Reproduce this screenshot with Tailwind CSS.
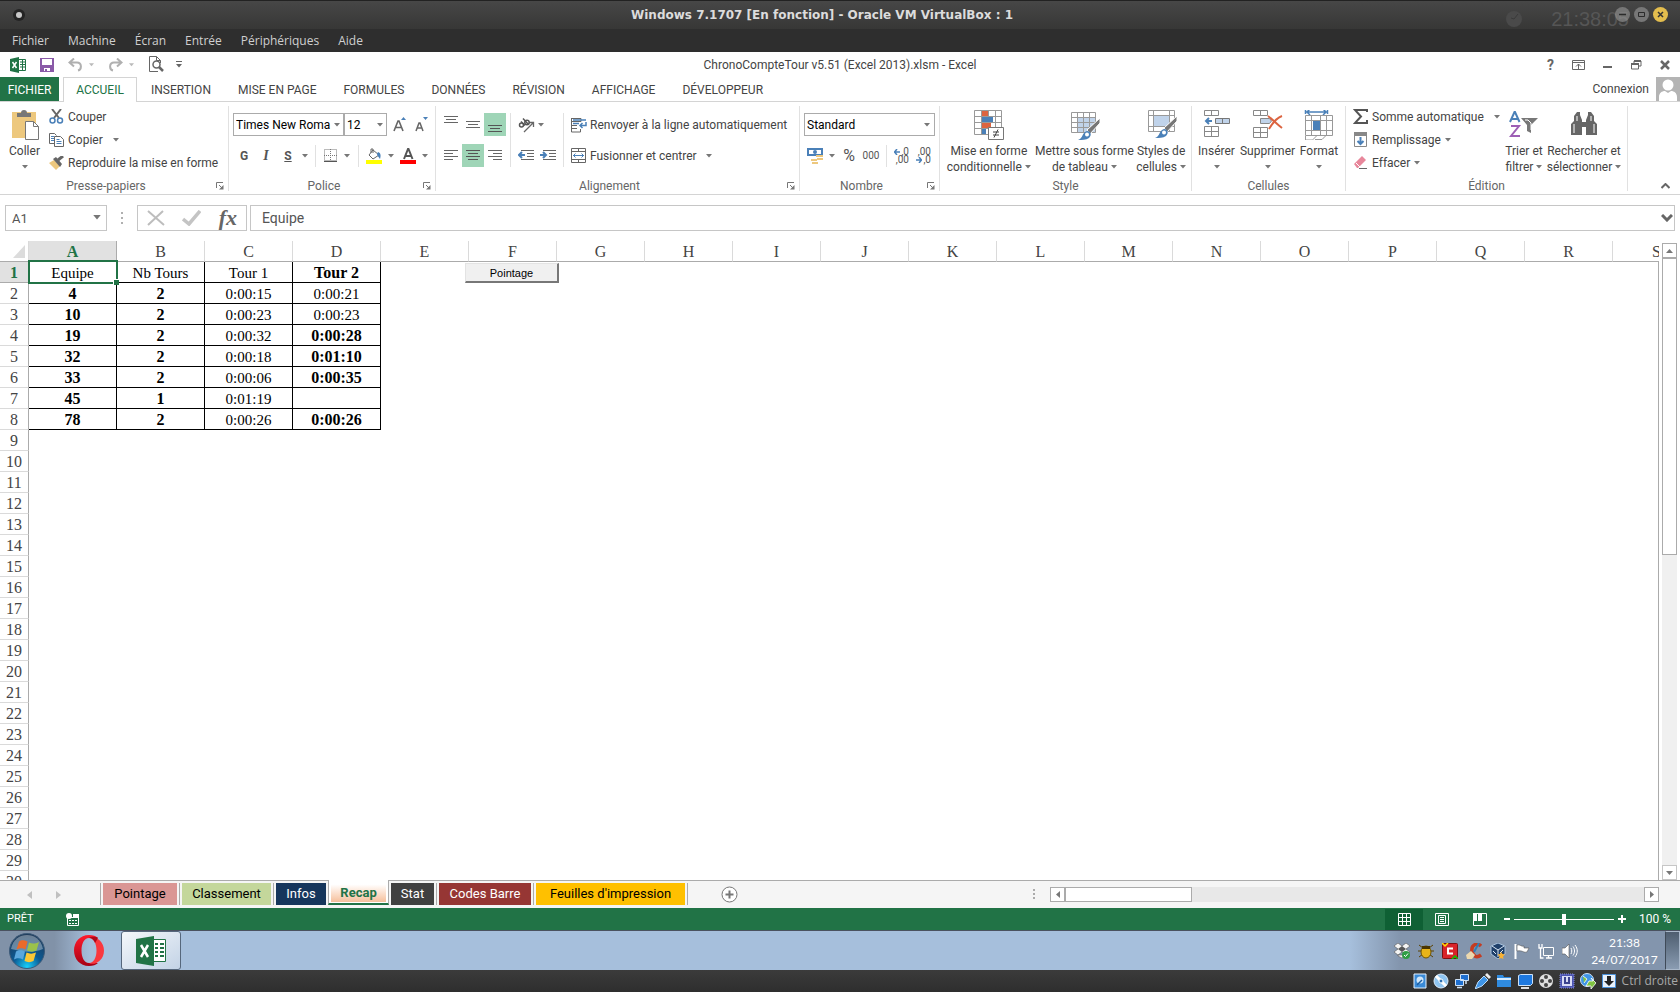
<!DOCTYPE html>
<html lang="fr" class="h-full">

<head>
  <meta charset="UTF-8" />
  <meta name="viewport" content="width=device-width, initial-scale=1.0" />
  <title>ChronoCompteTour v5.51 (Excel 2013).xlsm - Excel</title>
  <script src="https://cdn.jsdelivr.net/npm/@tailwindcss/browser@4"></script>
</head>

<body class="h-full min-h-screen flex flex-col overflow-hidden bg-white text-[#444444] text-[12px] leading-4 font-['Roboto','Noto_Sans',sans-serif]">

  <!-- shared glyphs -->
  <svg class="hidden">
    <symbol id="caret" viewBox="0 0 6 4"><path d="M0 0h6L3 3.5z" fill="#777" /></symbol>
    <symbol id="launcher" viewBox="0 0 8 8"><path d="M.5 6V.5H7M3 3l3 3" fill="none" stroke="#777" /><path d="M7.500 3v4.500H3z" fill="#777" /></symbol>
  </svg>

  <!-- Host window title -->
  <header class="relative h-[29px] shrink-0 flex items-center justify-between px-3 bg-gradient-to-b from-[#474747] to-[#373736] border-t border-[#222]">
    <svg width="14" height="14" viewBox="0 0 14 14"><circle cx="7" cy="7" r="6" fill="#242424" /><circle cx="7" cy="7" r="3" fill="#c8c8c8" /></svg>
    <h1 class="absolute inset-x-0 pr-[36px] text-center font-bold text-[12px] text-[#dcdcdc] font-['DejaVu_Sans',sans-serif]">Windows 7.1707 [En fonction] - Oracle VM VirtualBox : 1</h1>
    <div class="relative flex items-center gap-1 pt-2">
      <svg class="mr-[24px]" width="18" height="18" viewBox="0 0 18 18"><circle cx="9" cy="9" r="8" fill="#4a4a4a" /><path d="M9 9l4-5M9 9L6 8" stroke="#3a3a3a" /></svg>
      <span class="mr-[39px] text-[20px] leading-5 text-[#565656] font-['Liberation_Sans',sans-serif]">21:38:05</span>
      <div class="absolute right-0 top-[6px] flex gap-1">
        <button aria-label="Réduire"><svg width="15" height="15" viewBox="0 0 15 15"><circle cx="7.500" cy="7.500" r="7.500" fill="#999" fill-opacity=".6" /><path d="M4 7.500h7" stroke="#2b2b2b" stroke-width="1.500" /></svg></button>
        <button aria-label="Agrandir"><svg width="15" height="15" viewBox="0 0 15 15"><circle cx="7.500" cy="7.500" r="7.500" fill="#777" /><path d="M4.500 5.500h6v4h-6z" fill="none" stroke="#2b2b2b" /></svg></button>
        <button aria-label="Fermer"><svg width="15" height="15" viewBox="0 0 15 15"><circle cx="7.500" cy="7.500" r="7.500" fill="#e3bd4e" /><path d="M5 5l5 5M10 5l-5 5" stroke="#333" stroke-width="1.500" /></svg></button>
      </div>
    </div>
  </header>

  <!-- Host menu -->
  <nav class="h-[23px] shrink-0 flex items-center gap-[19px] px-3 bg-[#2e2e2e] text-[#d0d0d0] font-['Open_Sans',sans-serif]">
    <a href="#">Fichier</a>
    <a href="#">Machine</a>
    <a href="#">Écran</a>
    <a href="#">Entrée</a>
    <a href="#">Périphériques</a>
    <a href="#">Aide</a>
  </nav>

  <!-- Quick access bar -->
  <div class="relative h-[25px] shrink-0 flex items-center px-[10px]">
    <svg width="16" height="16" viewBox="0 0 16 16"><path d="M9 2.500h6.500v11H9" fill="#fff" stroke="#217346" /><path d="M10 5h5M10 7.500h5M10 10h5M12.500 3v10" stroke="#217346" /><path d="M0 2l9-2v16l-9-2z" fill="#217346" /><path d="M2.500 5l4 6M6.500 5l-4 6" stroke="#fff" stroke-width="1.500" /></svg>
    <button class="ml-[14px]" aria-label="Enregistrer"><svg width="14" height="14" viewBox="0 0 14 14"><path d="M0 0h14v14H0z" fill="#8a5aa8" /><path d="M2 1h10v6H2zM4 10h6v3H4z" fill="#fff" /><path d="M5 11h2v3H5z" fill="#8a5aa8" /></svg></button>
    <button class="ml-[14px] flex items-center gap-[6px]" aria-label="Annuler">
      <svg width="15" height="14" viewBox="0 0 15 14"><path d="M2 4.500h7c5 0 5 7 1 8M6 .500l-4.500 4L6 8.500" fill="none" stroke="#b0b0b0" stroke-width="2" /></svg>
      <svg class="opacity-50" width="5" height="4"><use href="#caret" /></svg>
    </button>
    <button class="ml-[14px] flex items-center gap-[6px]" aria-label="Rétablir">
      <svg width="15" height="14" viewBox="0 0 15 14"><path d="M13 4.500H6c-5 0-5 7-1 8M9 .500l4.500 4L9 8.500" fill="none" stroke="#b0b0b0" stroke-width="2" /></svg>
      <svg class="opacity-50" width="5" height="4"><use href="#caret" /></svg>
    </button>
    <button class="ml-[15px]" aria-label="Aperçu"><svg width="15" height="17" viewBox="0 0 15 17"><path d="M9 15.500H.5V.5h7l4 4V7M7.500.5v4h4" fill="none" stroke="#666" /><circle cx="7.500" cy="8.500" r="3.500" fill="#fff" stroke="#666" stroke-width="1.500" /><path d="M10 11l4 4" stroke="#666" stroke-width="2.500" /></svg></button>
    <button class="ml-3" aria-label="Personnaliser"><svg width="6" height="7" viewBox="0 0 6 7"><path d="M0 .5h6" stroke="#666" /><path d="M0 3h6L3 6.500z" fill="#666" /></svg></button>
    <h2 class="absolute inset-x-0 text-center pointer-events-none">ChronoCompteTour v5.51 (Excel 2013).xlsm - Excel</h2>
    <div class="ml-auto flex items-center gap-[18px]">
      <button class="font-bold text-[14px] text-[#666]" aria-label="Aide">?</button>
      <button aria-label="Options du ruban"><svg width="13" height="10" viewBox="0 0 13 10"><path d="M.5.5h12v9H.5zM.5 2.500h12M6.500 9V4M4 6.500L6.500 4 9 6.500" fill="none" stroke="#666" /></svg></button>
      <button aria-label="Réduire Excel"><svg width="10" height="10" viewBox="0 0 10 10"><path d="M0 6h9v2H0z" fill="#666" /></svg></button>
      <button aria-label="Restaurer"><svg width="11" height="10" viewBox="0 0 11 10"><path d="M3 3V1h7v5H8M.5 4h7v5h-7z" fill="none" stroke="#666" /><path d="M3 1h7M0 4h8" stroke="#666" stroke-width="2" /></svg></button>
      <button aria-label="Fermer Excel"><svg width="10" height="10" viewBox="0 0 10 10"><path d="M1 1l8 8M9 1L1 9" stroke="#666" stroke-width="2.500" /></svg></button>
    </div>
  </div>

  <!-- Ribbon tabs -->
  <nav class="h-[25px] shrink-0 flex items-stretch border-b border-[#d4d4d4]">
    <a href="#" class="w-[59px] pt-px flex items-center justify-center bg-[#217346] text-white">FICHIER</a>
    <a href="#" class="w-[74px] ml-1 -mb-px flex items-center justify-center bg-white border border-b-0 border-[#d4d4d4] text-[#217346]">ACCUEIL</a>
    <div class="ml-[14px] pt-[2px] flex items-center gap-[27px]">
      <a href="#">INSERTION</a>
      <a href="#">MISE EN PAGE</a>
      <a href="#">FORMULES</a>
      <a href="#">DONNÉES</a>
      <a href="#">RÉVISION</a>
      <a href="#">AFFICHAGE</a>
      <a href="#">DÉVELOPPEUR</a>
    </div>
    <a href="#" class="ml-auto mr-[7px] flex items-center">Connexion</a>
    <svg width="24" height="24" viewBox="0 0 24 24"><path d="M0 0h24v24H0z" fill="#b4b4b4" /><circle cx="12" cy="8" r="5.500" fill="#fff" /><path d="M3 24v-4c0-4 3-6 6-6l3 2 3-2c3 0 6 2 6 6v4z" fill="#fff" /></svg>
  </nav>

  <!-- Ribbon -->
  <section class="h-[93px] shrink-0 flex pt-1 pb-[3px] border-b border-[#d4d4d4]">
    <!-- Presse-papiers -->
    <div class="w-[229px] shrink-0 flex flex-col border-r border-[#e1e1e1]">
      <div class="flex-1 flex">
        <button class="w-[49px] pt-1 flex flex-col items-center">
          <svg width="30" height="30" viewBox="0 0 30 30"><path d="M2 2h24v26H2z" fill="#edc87e" /><path d="M7 7V3h4a3 3 0 0 1 6 0h4v4z" fill="#777" /><path d="M15.500 11.500h8l5 5v13h-13z" fill="#fff" stroke="#777" /><path d="M23.500 11.500v5h5" fill="none" stroke="#777" /></svg>
          <span class="mt-[3px]">Coller</span>
          <svg class="mt-[6px]" width="6" height="4"><use href="#caret" /></svg>
        </button>
        <div class="-mt-px flex flex-col items-start">
          <button class="h-[23px] flex items-center gap-1">
            <svg width="15" height="15" viewBox="0 0 15 15"><path d="M3 0l7 9M12 0L5 9" stroke="#666" stroke-width="2" /><circle cx="3.500" cy="11.500" r="2.500" fill="none" stroke="#4a80b8" stroke-width="1.500" /><circle cx="11" cy="11.500" r="2.500" fill="none" stroke="#4a80b8" stroke-width="1.500" /></svg>
            Couper
          </button>
          <button class="h-[23px] flex items-center gap-1">
            <svg width="15" height="14" viewBox="0 0 15 14"><path d="M5 10.500H.5V.5h5l2 2" fill="none" stroke="#666" /><path d="M2 3.500h3M2 5.500h3M2 7.500h3" stroke="#4a80b8" /><path d="M5.500 3.500h6l3 3v7h-9z" fill="#fff" stroke="#666" /><path d="M7.500 6.500h3M7.500 8.500h5M7.500 10.500h5" stroke="#4a80b8" /></svg>
            Copier
            <svg class="ml-[6px]" width="6" height="4"><use href="#caret" /></svg>
          </button>
          <button class="h-[23px] flex items-center gap-1">
            <svg width="15" height="14" viewBox="0 0 15 14"><path d="M0 7l5-3 6 6-4 4z" fill="#edc87e" /><path d="M4 3l3-2 6 7-2 3z" fill="#666" /><path d="M9 4l5-4" stroke="#666" stroke-width="3" /></svg>
            Reproduire la mise en forme
          </button>
        </div>
      </div>
      <div class="relative h-[10px] flex items-center justify-center pr-4 text-[#666]">Presse-papiers
        <button class="absolute right-1" aria-label="Options presse-papiers"><svg width="8" height="8"><use href="#launcher" /></svg></button>
      </div>
    </div>

    <!-- Police -->
    <div class="w-[207px] shrink-0 flex flex-col border-r border-[#e1e1e1]">
      <div class="flex-1 pt-[7px] pl-1 flex flex-col gap-2">
        <div class="h-[23px] flex items-center">
          <div class="relative h-[23px] flex items-center">
            <input aria-label="Police" value="Times New Roma" class="w-[111px] h-[23px] px-[2px] border border-[#ababab] text-black" />
            <svg class="absolute right-[4px]" width="6" height="4"><use href="#caret" /></svg>
          </div>
          <div class="relative h-[23px] flex items-center">
            <input aria-label="Taille" value="12" class="w-[43px] h-[23px] px-[2px] border border-[#ababab] text-black" />
            <svg class="absolute right-1" width="6" height="4"><use href="#caret" /></svg>
          </div>
          <button class="w-[22px] ml-[2px] flex justify-center" aria-label="Agrandir la police"><svg width="14" height="16" viewBox="0 0 14 16"><path d="M1 14L5 4h1l4 10M2.500 10.500h6" fill="none" stroke="#666" stroke-width="1.600" /><path d="M8 3h5l-2.500-3z" fill="#4a80b8" /></svg></button>
          <button class="w-[22px] flex justify-center" aria-label="Réduire la police"><svg width="14" height="16" viewBox="0 0 14 16"><path d="M1 14l3-8h1l3 8M2 11h5" fill="none" stroke="#666" stroke-width="1.500" /><path d="M8 0h5l-2.500 3z" fill="#4a80b8" /></svg></button>
        </div>
        <div class="h-[23px] flex items-center text-[#555]">
          <button class="w-[22px] font-bold">G</button>
          <button class="w-[22px] font-bold italic font-['Liberation_Serif',serif] text-[14px]">I</button>
          <button class="w-[22px] font-bold underline">S</button>
          <button class="w-3 flex justify-center" aria-label="Soulignement"><svg width="6" height="4"><use href="#caret" /></svg></button>
          <span class="w-px h-[22px] ml-1 bg-[#e1e1e1]"></span>
          <button class="w-[22px] ml-[3px] flex justify-center" aria-label="Bordures"><svg width="13" height="13" viewBox="0 0 13 13"><path d="M.5.5h12v11H.5zM6.500 0v12M0 6.500h13" fill="none" stroke="#777" stroke-dasharray="1 1" /><path d="M0 12.500h13" stroke="#555" /></svg></button>
          <button class="w-3 flex justify-center" aria-label="Choix bordures"><svg width="6" height="4"><use href="#caret" /></svg></button>
          <span class="w-px h-[22px] ml-[5px] bg-[#e1e1e1]"></span>
          <button class="w-[22px] ml-1 flex justify-center" aria-label="Remplissage"><svg width="16" height="16" viewBox="0 0 16 16"><path d="M7 2l6 5-6 4-4-4zM5 5V1h2v4" fill="#fff" stroke="#666" /><path d="M12 4c3 1 3 4 2 7-1-2-3-3-3-5z" fill="#4a80b8" /><path d="M0 12h16v4H0z" fill="#ff0" /></svg></button>
          <button class="w-3 flex justify-center" aria-label="Choix remplissage"><svg width="6" height="4"><use href="#caret" /></svg></button>
          <button class="w-[22px] flex justify-center" aria-label="Couleur de police"><svg width="16" height="16" viewBox="0 0 16 16"><path d="M4 11L8 1h.5l4 10M5.500 8h6" fill="none" stroke="#555" stroke-width="2" /><path d="M0 12h16v4H0z" fill="#f00" /></svg></button>
          <button class="w-3 flex justify-center" aria-label="Choix couleur"><svg width="6" height="4"><use href="#caret" /></svg></button>
        </div>
      </div>
      <div class="relative h-[10px] flex items-center justify-center pr-4 text-[#666]">Police
        <button class="absolute right-1" aria-label="Options police"><svg width="8" height="8"><use href="#launcher" /></svg></button>
      </div>
    </div>

    <!-- Alignement -->
    <div class="w-[364px] shrink-0 flex flex-col border-r border-[#e1e1e1]">
      <div class="flex-1 pt-[7px] pl-1 flex">
        <div class="flex flex-col gap-2">
          <div class="h-[23px] flex">
            <button class="w-[22px] pt-[3px] flex justify-center" aria-label="Haut"><svg width="14" height="8" viewBox="0 0 14 8"><path d="M0 .5h14M2 3.500h10M0 6.500h14" stroke="#666" /></svg></button>
            <button class="w-[22px] flex items-center justify-center" aria-label="Milieu"><svg width="14" height="8" viewBox="0 0 14 8"><path d="M0 .5h14M2 3.500h10M0 6.500h14" stroke="#666" /></svg></button>
            <button class="w-[22px] pb-[3px] flex items-end justify-center bg-[#9fd5b7]" aria-label="Bas"><svg width="14" height="8" viewBox="0 0 14 8"><path d="M0 .5h14M2 3.500h10M0 6.500h14" stroke="#555" /></svg></button>
          </div>
          <div class="h-[23px] flex">
            <button class="w-[22px] flex items-center justify-center" aria-label="Gauche"><svg width="14" height="11" viewBox="0 0 14 11"><path d="M0 .5h14M0 3.500h9M0 6.500h14M0 9.500h9" stroke="#666" /></svg></button>
            <button class="w-[22px] flex items-center justify-center bg-[#9fd5b7]" aria-label="Centrer"><svg width="14" height="11" viewBox="0 0 14 11"><path d="M0 .5h14M2 3.500h10M0 6.500h14M2 9.500h10" stroke="#555" /></svg></button>
            <button class="w-[22px] flex items-center justify-center" aria-label="Droite"><svg width="14" height="11" viewBox="0 0 14 11"><path d="M0 .5h14M5 3.500h9M0 6.500h14M5 9.500h9" stroke="#666" /></svg></button>
          </div>
        </div>
        <div class="ml-1 w-[53px] h-[54px] flex flex-col gap-2 border-l border-[#e1e1e1]">
          <button class="h-[23px] pl-[7px] flex items-center gap-[3px]" aria-label="Orientation"><svg width="17" height="16" viewBox="0 0 17 16"><path d="M6 15L15 6M11 5.500h4.500V10" fill="none" stroke="#666" stroke-width="1.300" /><g fill="none" stroke="#555" stroke-width="1.500"><circle cx="3.500" cy="8" r="2" /><path d="M3 4.500l4 4" /><circle cx="9" cy="5.500" r="2.200" /><path d="M5 1.500L10 7" /></g></svg><svg width="6" height="4"><use href="#caret" /></svg></button>
          <div class="h-[23px] pl-[7px] flex items-center gap-[6px]">
            <button aria-label="Diminuer le retrait"><svg width="16" height="11" viewBox="0 0 16 11"><path d="M3 .5h13M9 3.500h7M9 6.500h7M3 9.500h13" stroke="#666" /><path d="M1 5h6M4 2L1 5l3 3" fill="none" stroke="#4a80b8" stroke-width="2" /></svg></button>
            <button aria-label="Augmenter le retrait"><svg width="16" height="11" viewBox="0 0 16 11"><path d="M3 .5h13M9 3.500h7M9 6.500h7M3 9.500h13" stroke="#666" /><path d="M0 5h6M3 2l3 3-3 3" fill="none" stroke="#4a80b8" stroke-width="2" /></svg></button>
          </div>
        </div>
        <div class="pl-[7px] h-[54px] flex flex-col gap-2 items-start border-l border-[#e1e1e1]">
          <button class="h-[23px] flex items-center gap-[3px] whitespace-nowrap"><svg width="16" height="16" viewBox="0 0 16 16"><path d="M.5 1v14h9v-3M0 1.500h10v3H0M0 8.500h6M0 11.500h6" fill="none" stroke="#666" /><path d="M2 3h13M2 6.500h6" stroke="#4a80b8" stroke-width="1.500" /><path d="M15 5v3.500H9M11.500 6L9 8.500l2.500 2.500" fill="none" stroke="#4a80b8" stroke-width="1.500" /></svg>Renvoyer à la ligne automatiquement</button>
          <button class="h-[23px] flex items-center gap-[3px] whitespace-nowrap"><svg width="16" height="16" viewBox="0 0 16 16"><path d="M.5.5h14v14H.5zM0 3.500h15M0 11.500h15M7.500 0v3M7.500 12v3" fill="none" stroke="#666" /><path d="M2 7.500h11M4.500 5.500l-2 2 2 2M10.500 5.500l2 2-2 2" fill="none" stroke="#4a80b8" /></svg>Fusionner et centrer<svg class="ml-[6px]" width="6" height="4"><use href="#caret" /></svg></button>
        </div>
      </div>
      <div class="relative h-[10px] flex items-center justify-center pr-4 text-[#666]">Alignement
        <button class="absolute right-1" aria-label="Options alignement"><svg width="8" height="8"><use href="#launcher" /></svg></button>
      </div>
    </div>

    <!-- Nombre -->
    <div class="w-[140px] shrink-0 flex flex-col border-r border-[#e1e1e1]">
      <div class="flex-1 pt-[7px] px-1 flex flex-col gap-2">
        <div class="relative h-[23px] flex items-center">
          <input aria-label="Format de nombre" value="Standard" class="w-full h-[23px] px-[2px] border border-[#ababab] text-black" />
          <svg class="absolute right-[5px]" width="6" height="4"><use href="#caret" /></svg>
        </div>
        <div class="h-[23px] flex items-center text-[#555]">
          <button class="w-[34px] pl-[3px] flex items-center gap-[5px]" aria-label="Format monétaire"><svg class="shrink-0" width="17" height="16" viewBox="0 0 17 16"><path d="M0 0h16v8H0z" fill="#4a80b8" /><path d="M2 2h12v4H2z" fill="#fff" /><circle cx="8" cy="4" r="2" fill="#4a80b8" /><path d="M9 7h7v7h-4v2H4v-5h5z" fill="#fff" /><path d="M9 7h7v2H9zM10 10h6v2h-6zM4 11h6v2H4zM5 14h6v2H5z" fill="#edc87e" /></svg><svg class="shrink-0" width="6" height="4"><use href="#caret" /></svg></button>
          <button class="w-[22px] text-[16px]">%</button>
          <button class="w-[22px] text-[10px]">000</button>
          <span class="w-px h-[22px] ml-[4px] bg-[#e1e1e1]"></span>
          <button class="w-[22px] ml-[3px] flex flex-col items-end pr-[3px] text-[10px] leading-[8px]"><span class="flex items-center gap-px"><svg width="6" height="6" viewBox="0 0 6 6"><path d="M0 3h6M3 0L.5 3 3 6" fill="none" stroke="#4a80b8" stroke-width="1.500" /></svg>,0</span>,00</button>
          <button class="w-[22px] flex flex-col items-end pr-[3px] text-[10px] leading-[8px]">,00<span class="flex items-center gap-px"><svg width="6" height="6" viewBox="0 0 6 6"><path d="M0 3h6M3 0l2.500 3L3 6" fill="none" stroke="#4a80b8" stroke-width="1.500" /></svg>,0</span></button>
        </div>
      </div>
      <div class="relative h-[10px] flex items-center justify-center pr-4 text-[#666]">Nombre
        <button class="absolute right-1" aria-label="Options nombre"><svg width="8" height="8"><use href="#launcher" /></svg></button>
      </div>
    </div>

    <!-- Style -->
    <div class="w-[252px] shrink-0 flex flex-col border-r border-[#e1e1e1]">
      <div class="flex-1 px-1 pt-1 flex whitespace-nowrap">
        <button class="w-[90px] flex flex-col items-center">
          <svg width="30" height="30" viewBox="0 0 30 30"><path d="M.5.5h27v24H.5zM7.500 0v25M14.500 0v25M21.500 0v25M0 6.500h28M0 12.500h28M0 18.500h28" fill="#fff" stroke="#999" /><path d="M8 1h6v5H8zM8 13h9v5H8z" fill="#dc6440" /><path d="M8 7h11v5H8zM8 19h4v5H8z" fill="#4a80b8" /><path d="M14.500 17.500h15v12h-15z" fill="#fff" stroke="#777" /><path d="M19 22h6M19 25h6M24 19.500l-4 8" stroke="#444" /></svg>
          <span class="mt-[3px]">Mise en forme</span>
          <span class="flex items-center gap-[3px]">conditionnelle<svg width="6" height="4"><use href="#caret" /></svg></span>
        </button>
        <button class="w-[102px] flex flex-col items-center">
          <svg class="ml-1" width="30" height="30" viewBox="0 0 30 30"><path d="M7 8h18v14H7z" fill="#c0d3ea" /><path d="M.5 2.500h24v20H.5zM6.500 2v21M12.500 2v21M18.500 2v21M0 7.500h25M0 12.500h25M0 17.500h25" fill="none" stroke="#999" /><path d="M29 8v5L19 24l-3-4z" fill="#777" stroke="#fff" /><path d="M7 30c5-1 4-8 9-9 4 0 5 4 2 7-3 2-7 2-11 2z" fill="#4a80b8" /><circle cx="16" cy="24.500" r="2" fill="#fff" /></svg>
          <span class="mt-[3px]">Mettre sous forme</span>
          <span class="flex items-center gap-[3px]">de tableau<svg width="6" height="4"><use href="#caret" /></svg></span>
        </button>
        <button class="w-[52px] flex flex-col items-center">
          <svg class="ml-1" width="30" height="30" viewBox="0 0 30 30"><path d="M.5.500h26v21H.5zM5.500 0v22M21.500 0v22M0 5.500h27M0 16.500h27" fill="#fff" stroke="#999" /><path d="M6 6h15v10H6z" fill="#c0d3ea" /><path d="M29 6v5L19 22l-3-4z" fill="#777" stroke="#fff" /><path d="M7 28c5-1 4-8 9-9 4 0 5 4 2 7-3 2-7 2-11 2z" fill="#4a80b8" /><circle cx="16" cy="22.500" r="2" fill="#fff" /></svg>
          <span class="mt-[3px]">Styles de</span>
          <span class="flex items-center gap-[3px]">cellules<svg width="6" height="4"><use href="#caret" /></svg></span>
        </button>
      </div>
      <div class="h-[10px] flex items-center justify-center text-[#666]">Style</div>
    </div>

    <!-- Cellules -->
    <div class="w-[154px] shrink-0 flex flex-col border-r border-[#e1e1e1]">
      <div class="flex-1 pt-1 flex">
        <button class="w-[49px] flex flex-col items-center">
          <svg width="30" height="30" viewBox="0 0 30 30"><path d="M2.500.5h14v5h-14zM9.500 0v6M2.500 16.500h14v10h-14zM9.500 16v11M2 21.500h15" fill="none" stroke="#888" /><path d="M13.500 8.500h14v5h-14zM20.500 8v6" fill="#c0d3ea" stroke="#777" /><path d="M4 11h6M7 8l-3 3 3 3" fill="none" stroke="#4a80b8" stroke-width="2" /></svg>
          <span class="mt-[3px]">Insérer</span>
          <svg class="mt-[6px]" width="6" height="4"><use href="#caret" /></svg>
        </button>
        <button class="w-[53px] flex flex-col items-center">
          <svg width="30" height="30" viewBox="0 0 30 30"><path d="M.5.5h14v5H.5zM7.500 0v6M.5 17.500h14v10H.5zM7.500 17v11M0 22.500h15" fill="none" stroke="#888" /><path d="M7.500 8.500h9l2 2.500-2 2.500h-9z" fill="#c0d3ea" stroke="#888" /><path d="M15 6c4 3 10 9 14 12M29 6c-6 2-10 8-13 13" fill="none" stroke="#dc6440" stroke-width="2" /></svg>
          <span class="mt-[3px]">Supprimer</span>
          <svg class="mt-[6px]" width="6" height="4"><use href="#caret" /></svg>
        </button>
        <button class="w-[50px] flex flex-col items-center">
          <svg width="30" height="30" viewBox="0 0 30 30"><path d="M1.500 0v4M23.500 0v4M2 2h21M6-1L3 2l3 3M19-1l3 3-3 3" fill="none" stroke="#4a80b8" stroke-width="1.500" /><path d="M1.500 5.500h27v20h-27zM7.500 5v21M16.500 5v21M22.500 5v21M1 10.500h28M1 20.500h28M1.500 26v4h7l4-4M11 29.500h7l4-4" fill="none" stroke="#999" /><path d="M9 11h7v9H9z" fill="#4a80b8" /></svg>
          <span class="mt-[3px]">Format</span>
          <svg class="mt-[6px]" width="6" height="4"><use href="#caret" /></svg>
        </button>
      </div>
      <div class="h-[10px] flex items-center justify-center text-[#666]">Cellules</div>
    </div>

    <!-- Édition -->
    <div class="w-[282px] shrink-0 flex flex-col border-r border-[#e1e1e1]">
      <div class="flex-1 pl-[7px] flex whitespace-nowrap">
        <div class="w-[149px] -mt-px flex flex-col items-start">
          <button class="h-[23px] flex items-center gap-1"><svg width="15" height="15" viewBox="0 0 15 15"><path d="M14 3V1H2l6 6.500L2 14h12v-3" fill="none" stroke="#555" stroke-width="2" /></svg>Somme automatique<svg class="ml-[6px]" width="6" height="4"><use href="#caret" /></svg></button>
          <button class="h-[23px] flex items-center gap-1"><svg width="15" height="15" viewBox="0 0 15 15"><path d="M1.500.5h12v14h-12z" fill="#fff" stroke="#888" /><path d="M1 0h13v4H1z" fill="#888" /><path d="M7.500 5v7M4.500 9l3 3 3-3" fill="none" stroke="#4a80b8" stroke-width="2" /></svg>Remplissage<svg width="6" height="4"><use href="#caret" /></svg></button>
          <button class="h-[23px] flex items-center gap-1"><svg width="15" height="13" viewBox="0 0 15 13"><path d="M1 8l8-8 4 4-8 8H4z" fill="#e8879b" /><path d="M3 7l4 4" stroke="#fff" /><path d="M6 12.500h8" stroke="#666" /></svg>Effacer<svg width="6" height="4"><use href="#caret" /></svg></button>
        </div>
        <button class="w-[44px] pt-1 flex flex-col items-center">
          <svg width="30" height="30" viewBox="0 0 30 30"><path d="M1 12L5.500 2h.5l4.500 10M2.500 9h6.500" fill="none" stroke="#4a80b8" stroke-width="2" /><path d="M2 16h8L2 26h9" fill="none" stroke="#9d5fb5" stroke-width="2" /><path d="M12 8h17l-7 7v8l-4-2v-6z" fill="#777" /><path d="M16 10h3l3 3v7" fill="none" stroke="#fff" /></svg>
          <span class="mt-[3px]">Trier et</span>
          <span class="flex items-center gap-[3px]">filtrer<svg width="6" height="4"><use href="#caret" /></svg></span>
        </button>
        <button class="w-[76px] pt-1 flex flex-col items-center">
          <svg width="30" height="30" viewBox="0 0 30 30"><path d="M2 25V14l3-3V6l3-4h3v3l2 5v15zM28 25V14l-3-3V6l-3-4h-3v3l-2 5v15zM13 12h4v5h-4z" fill="#666" /><path d="M5 14v9M8 6v5M25 14v9M22 6v5" stroke="#fff" /></svg>
          <span class="mt-[3px]">Rechercher et</span>
          <span class="flex items-center gap-[3px]">sélectionner<svg width="6" height="4"><use href="#caret" /></svg></span>
        </button>
      </div>
      <div class="h-[10px] flex items-center justify-center text-[#666]">Édition</div>
    </div>
    <button class="ml-auto mr-[10px] self-end" aria-label="Réduire le ruban"><svg width="9" height="8" viewBox="0 0 9 8"><path d="M.5 5l4-4 4 4" fill="none" stroke="#666" stroke-width="2" /></svg></button>
  </section>

  <!-- Formula bar -->
  <section class="shrink-0 py-[10px] px-[5px] flex text-[#555]">
    <div class="relative flex items-center">
      <input aria-label="Zone Nom" value="A1" class="w-[102px] h-[26px] px-[6px] border border-[#c6c6c6] text-[13px]" />
      <svg class="absolute right-[6px] bottom-[11px]" width="8" height="5"><use href="#caret" /></svg>
    </div>
    <svg class="mx-[14px] self-center" width="2" height="12" viewBox="0 0 2 12"><path d="M0 0h2v2H0zM0 5h2v2H0zM0 10h2v2H0z" fill="#b0b0b0" /></svg>
    <div class="w-[110px] h-[26px] px-[9px] flex items-center justify-between border border-[#c6c6c6]">
      <button aria-label="Annuler la saisie"><svg width="18" height="16" viewBox="0 0 18 16"><path d="M1 1l16 14M16 1L1 15" stroke="#bdbdbd" stroke-width="2" /></svg></button>
      <button aria-label="Entrer"><svg width="19" height="16" viewBox="0 0 19 16"><path d="M1 9l6 5L18 1" fill="none" stroke="#c4c4c4" stroke-width="3.500" /></svg></button>
      <button class="font-bold italic text-[22px] leading-6 text-[#666] font-['Liberation_Serif',serif]" aria-label="Insérer une fonction">fx</button>
    </div>
    <div class="relative ml-[3px] flex-1 flex items-center">
      <input aria-label="Barre de formule" value="Equipe" class="w-full h-[26px] px-[11px] border border-[#c6c6c6] text-[14px]" />
      <svg class="absolute right-[2px]" width="12" height="8" viewBox="0 0 12 8"><path d="M1 1l5 5 5-5" fill="none" stroke="#666" stroke-width="3" /></svg>
    </div>
  </section>

  <!-- Sheet -->
  <main class="flex-1 min-h-0 flex bg-white">
    <div class="relative flex-1 min-w-0 overflow-hidden font-['Liberation_Serif',serif] text-[16px] leading-[18px] text-black">
      <table class="table-fixed w-[1701px] border-separate border-spacing-0 text-center">
        <thead id="columns"></thead>
        <tbody id="rows"></tbody>
      </table>
      <div class="absolute left-[28px] top-[19px] w-[90px] h-[24px] border-2 border-[#217346] pointer-events-none">
        <span class="absolute -right-[3px] -bottom-[3px] size-[6px] bg-[#217346] border-l border-t border-white"></span>
      </div>
      <button class="absolute left-[465px] top-[22px] w-[94px] h-5 bg-[#f0f0f0] border-t border-l border-r-2 border-b-2 border-t-[#e3e3e3] border-l-[#e3e3e3] border-r-[#777] border-b-[#777] text-[11px] leading-4 font-['Liberation_Sans',sans-serif]">Pointage</button>
      <!-- right edge of the cells -->
      <span class="absolute right-0 top-5 bottom-0 w-px bg-[#ababab]"></span>
    </div>
    <!-- vertical scroll -->
    <div class="w-[21px] pt-[2px] px-[3px] flex flex-col">
      <button class="h-[15px] flex items-center justify-center border border-[#ababab]" aria-label="Haut"><svg width="7" height="4" viewBox="0 0 7 4"><path d="M0 4h7L3.500 0z" fill="#777" /></svg></button>
      <div class="flex-1 bg-[#f0f0f0]"><div class="h-[49%] border border-[#ababab] bg-white"></div></div>
      <button class="h-[15px] flex items-center justify-center bg-white border border-[#c6c6c6]" aria-label="Bas"><svg width="7" height="4" viewBox="0 0 7 4"><path d="M0 0h7L3.500 4z" fill="#777" /></svg></button>
    </div>
  </main>

  <!-- Sheet tabs -->
  <div class="h-7 shrink-0 flex bg-[#f5f5f5] border-t border-[#ababab] text-[13px] text-black">
    <div class="w-[100px] pl-[27px] flex items-center gap-6">
      <button aria-label="Feuille précédente"><svg width="5" height="8" viewBox="0 0 5 8"><path d="M5 0v8L0 4z" fill="#c0c0c0" /></svg></button>
      <button aria-label="Feuille suivante"><svg width="5" height="8" viewBox="0 0 5 8"><path d="M0 0v8l5-4z" fill="#c0c0c0" /></svg></button>
    </div>
    <div class="flex pt-[2px] pb-[3px]">
      <div class="px-[2px] border-l border-[#ababab]"><button class="w-[74px] h-[22px] bg-[#da9694]">Pointage</button></div>
      <div class="px-[2px] border-l border-[#ababab]"><button class="w-[89px] h-[22px] bg-[#c4d79b]">Classement</button></div>
      <div class="px-[2px] border-l border-[#ababab]"><button class="w-[50px] h-[22px] bg-[#16365c] text-white">Infos</button></div>
    </div>
    <div class="w-[61px] h-[25px] -mt-px px-[2px] pb-px bg-white border-x border-[#ababab] border-b-2 border-b-[#217346]">
      <button class="w-full h-full pt-[3px] font-bold text-[#217346] bg-gradient-to-b from-white from-20% to-[#f5bf9b]">Recap</button>
    </div>
    <div class="flex pt-[2px] pb-[3px]">
      <div class="px-[2px]"><button class="w-[43px] h-[22px] bg-[#404040] text-white">Stat</button></div>
      <div class="px-[2px] border-l border-[#ababab]"><button class="w-[92px] h-[22px] bg-[#963634] text-white">Codes Barre</button></div>
      <div class="px-[2px] border-x border-[#ababab]"><button class="w-[149px] h-[22px] bg-[#ffc000]">Feuilles d'impression</button></div>
    </div>
    <button class="ml-[33px] mb-px" aria-label="Nouvelle feuille"><svg width="17" height="17" viewBox="0 0 17 17"><circle cx="8.500" cy="8.500" r="7.500" fill="#fff" stroke="#777" /><path d="M8.500 4.500v8M4.500 8.500h8" stroke="#777" stroke-width="2" /></svg></button>
    <svg class="ml-auto mr-[15px] mt-2" width="2" height="10" viewBox="0 0 2 10"><path d="M0 0h2v2H0zM0 4h2v2H0zM0 8h2v2H0z" fill="#ababab" /></svg>
    <div class="w-[609px] h-[15px] mr-[21px] mt-[6px] flex bg-[#e8e8e8]">
      <button class="w-[15px] flex items-center justify-center bg-white border border-[#ababab]" aria-label="Gauche"><svg width="4" height="7" viewBox="0 0 4 7"><path d="M4 0v7L0 3.500z" fill="#777" /></svg></button>
      <div class="w-[127px] bg-white border border-[#ababab]"></div>
      <button class="w-[15px] ml-auto flex items-center justify-center bg-white border border-[#ababab]" aria-label="Droite"><svg width="4" height="7" viewBox="0 0 4 7"><path d="M0 0v7l4-3.500z" fill="#777" /></svg></button>
    </div>
  </div>

  <!-- Status bar -->
  <div class="h-[22px] shrink-0 flex items-center bg-[#217346] text-white">
    <span class="w-[66px] pl-[7px] text-[11px]">PRÊT</span>
    <svg width="13" height="13" viewBox="0 0 13 13"><path d="M1.500 4.500h11v8h-11zM7 1.500h5.500v3" fill="none" stroke="#fff" /><path d="M7 1h6v4H2V4h5z" fill="#fff" /><path d="M3 7.500h8M3 10.500h8" stroke="#fff" stroke-dasharray="2 1" /><circle cx="3" cy="3" r="3" fill="#fff" /></svg>
    <button class="w-[38px] h-[21px] ml-auto flex items-center justify-center bg-[#0f6034]" aria-label="Normal"><svg width="13" height="13" viewBox="0 0 13 13"><path d="M.5.5h12v12H.5zM4.500 0v13M8.500 0v13M0 4.500h13M0 8.500h13" fill="none" stroke="#fff" /></svg></button>
    <button class="w-[38px] flex justify-center" aria-label="Mise en page"><svg width="14" height="13" viewBox="0 0 14 13"><path d="M.5.5h13v12H.5zM3.500 2.500h7v8h-7zM5 4.500h4M5 6.500h4M5 8.500h4" fill="none" stroke="#fff" /></svg></button>
    <button class="w-[38px] flex justify-center" aria-label="Sauts de page"><svg width="14" height="13" viewBox="0 0 14 13"><path d="M.5.5h13v12H.5z" fill="none" stroke="#fff" /><path d="M0 0h4v8H0zM5 0h4v8H5z" fill="#fff" /></svg></button>
    <button class="w-[15px] flex justify-center" aria-label="Zoom arrière"><svg width="6" height="2" viewBox="0 0 6 2"><path d="M0 0h6v2H0z" fill="#fff" /></svg></button>
    <div class="w-[100px] h-3 flex items-center">
      <input type="range" aria-label="Zoom" min="0" max="200" value="100" class="w-full h-px appearance-none bg-white [&::-webkit-slider-thumb]:appearance-none [&::-webkit-slider-thumb]:w-1 [&::-webkit-slider-thumb]:h-[11px] [&::-webkit-slider-thumb]:bg-white" />
    </div>
    <button class="w-4 flex justify-center" aria-label="Zoom avant"><svg width="8" height="8" viewBox="0 0 8 8"><path d="M3 0h2v8H3zM0 3h8v2H0z" fill="#fff" /></svg></button>
    <span class="w-[50px] pr-[9px] text-right">100 %</span>
  </div>

  <!-- Windows taskbar -->
  <footer class="h-10 shrink-0 flex border-t border-[#4a5260] bg-[#a6bfdc]">
    <div class="w-[121px] flex items-center bg-gradient-to-r from-[#8192a8] from-45% to-[#a6bfdc] to-75%">
      <button class="ml-[9px]" aria-label="Démarrer">
        <svg width="36" height="36" viewBox="0 0 36 36">
          <defs>
            <radialGradient id="orb" cx="50%" cy="95%" r="90%"><stop offset="0" stop-color="#19d0fb" /><stop offset=".45" stop-color="#0b5a94" /><stop offset="1" stop-color="#1f3c5c" /></radialGradient>
          </defs>
          <circle cx="18" cy="18" r="17.500" fill="url(#orb)" stroke="#3c5a78" />
          <path d="M2 16C4 6 11 2 18 2s14 4 16 14c-10 4-20 3-32 0z" fill="#fff" opacity=".35" />
          <path d="M10 8.500c3-2 5-1.500 8.500 0l-2 8c-3-1.500-5-2-9 0z" fill="#ea6a2a" />
          <path d="M20 9.500c3 1.500 6 1.500 10-.500l-2.500 8.500c-3 1.500-6 1.500-9.500 0z" fill="#9bc24b" />
          <path d="M7 18.500c3-2 5.500-1.500 9 0l-2 8c-3-1.500-5.500-2-9 0z" fill="#5aa7dd" />
          <path d="M17.500 19.500c3 1.500 6 1.500 9.500 0l-2.500 8.500c-3 1.500-6 1.500-9 0z" fill="#fbc735" />
        </svg>
      </button>
      <button class="ml-[29px]" aria-label="Opera">
        <svg width="30" height="31" viewBox="0 0 30 31">
          <defs><linearGradient id="opera" x1="0" y1="0" x2="0" y2="1"><stop offset="0" stop-color="#ff1b2d" /><stop offset="1" stop-color="#a70014" /></linearGradient></defs>
          <path d="M15 0C6 0 0 7 0 15.500S6 31 15 31c4 0 7-1 9-3l-9 0C10 28 7.500 22 7.500 15.500S10 3 15 3l9 0C22 1 19 0 15 0z" fill="url(#opera)" />
          <path d="M15 3c5-3 15 2 15 12.500S20 31 15 28c5 0 7.500-6 7.500-12.500S20 3 15 3z" fill="#f9383f" />
          <path d="M15 3c3-2 8-1 9 0l-3 5c-1-3-3-5-6-5z" fill="#b00819" />
        </svg>
      </button>
    </div>
    <button class="w-[60px] flex items-center justify-center rounded-[3px] border border-[#56677c] bg-gradient-to-br from-[#f4f7fa] to-[#c3d3e6]" aria-label="Excel">
      <svg width="30" height="30" viewBox="0 0 30 30"><path d="M17 3.500h12.500v22H17" fill="#fff" stroke="#217346" /><path d="M19 7h3v2h-3zM24 7h4v2h-4zM19 11h3v2h-3zM24 11h4v2h-4zM19 15h3v2h-3zM24 15h4v2h-4zM19 19h3v2h-3zM24 19h4v2h-4z" fill="#217346" /><path d="M0 3l18-3v30L0 27z" fill="#217346" /><path d="M5 9l7 12M12 9L5 21" stroke="#fff" stroke-width="2.500" /></svg>
    </button>
    <div class="flex-1"></div>
    <div class="flex items-center pl-[44px] bg-gradient-to-r from-[#a6bfdc] to-[#8395ad] to-[50px]">
      <div class="flex items-center gap-2">
        <svg width="16" height="16" viewBox="0 0 16 16"><path d="M4 0l4 3 4-3 4 3-4 3 4 3-4 3-4-3-4 3-4-3 4-3-4-3zM4 13l4 2 3-2v-1H4z" fill="#f4f4f4" stroke="#555" stroke-width=".6" /><path d="M8 3l4 3-4 3-4-3z" fill="#555" /><circle cx="12" cy="12" r="4" fill="#2f9e44" /><path d="M10 12l1.500 1.500L14 10.500" fill="none" stroke="#fff" /></svg>
        <svg width="16" height="16" viewBox="0 0 16 16"><path d="M1 2l4 3M15 2l-4 3M0 8h16M1 14l4-3M15 14l-4-3" stroke="#5d4200" /><ellipse cx="8" cy="9" rx="5" ry="6" fill="#e9b418" stroke="#6e5300" /><path d="M4 3h8v3H4z" fill="#4a3500" /></svg>
        <svg width="16" height="16" viewBox="0 0 16 16"><rect x=".5" y=".5" width="15" height="15" rx="1" fill="#d8232a" stroke="#7c0f12" /><path d="M11 5.500H6v5h5" fill="none" stroke="#fff" stroke-width="2" /><path d="M0 0l3 3 3-3" fill="none" stroke="#fd0" stroke-width="1.500" /><path d="M10 16l3-3 3 3" fill="none" stroke="#0c0" stroke-width="1.500" /></svg>
        <svg width="16" height="16" viewBox="0 0 16 16"><path d="M15 3C11-1 5 2 6 8s5 7 9 4" fill="none" stroke="#c43c22" stroke-width="3.500" /><path d="M13 0l-5 9" stroke="#2d7fb8" stroke-width="2" /><path d="M0 12l5-4 4 4-3 4H1z" fill="#ecd8ae" /></svg>
        <svg width="16" height="16" viewBox="0 0 16 16"><path d="M8 0l7 3v8l-7 5-7-5V3z" fill="#20406a" stroke="#a8c2dd" /><path d="M2 3l6 4 6-4M8 7v7M3 8l3 3M13 7l-3 3" fill="none" stroke="#dde9f6" /><path d="M11 9l1.500 2 2.500.5-2 2 .5 2.500-2.500-1-2 1 .5-2.500-2-2 2.500-.5z" fill="#f9b233" /></svg>
        <svg width="16" height="16" viewBox="0 0 16 16"><path d="M1.500 1v15" stroke="#fff" stroke-width="2" /><path d="M3 2c3-1 4 2 7 1v2h5l-2 4c-4 1-4-2-10-1z" fill="#fff" stroke="#555" stroke-width=".6" /></svg>
        <svg width="16" height="16" viewBox="0 0 16 16"><path d="M5.500 4.500h10v8h-10z" fill="#7d8fa5" stroke="#fff" /><path d="M8 15h6M10.500 13v2M1 1v4h3V1M2.500 5v10h3" fill="none" stroke="#fff" stroke-width="1.300" /></svg>
        <svg width="16" height="16" viewBox="0 0 16 16"><path d="M0 5h3l4-4v14l-4-4H0z" fill="#fff" stroke="#555" stroke-width=".6" /><path d="M9 5c1 2 1 4 0 6M11 3.500c2 3 2 6 0 9M13 2c3 4 3 8 0 12" fill="none" stroke="#fff" /></svg>
      </div>
      <div class="w-[81px] ml-[6px] pt-px text-center text-white leading-[17px] font-['Lato',sans-serif]">21:38<br />24/07/2017</div>
    </div>
    <button class="w-[15px] border border-[#a9b8ca] border-l-[#3f4a58] bg-gradient-to-b from-[#4f5e70] via-[#6b7c90] to-[#8a9cb2]" aria-label="Bureau"></button>
  </footer>

  <!-- Host status -->
  <div class="h-[22px] shrink-0 flex items-center justify-end gap-[5px] pr-[2px] bg-gradient-to-b from-[#3b3b3b] to-[#2e2e2e] text-[#a8a8a8] font-['Open_Sans',sans-serif]">
    <svg width="16" height="16" viewBox="0 0 16 16"><path d="M2 1h12v14H2z" fill="#3a8bd8" stroke="#e6f2ff" /><circle cx="8" cy="7" r="3.500" fill="#cfe6fa" /><path d="M5 12l5-5" stroke="#1c5c9e" stroke-width="1.500" /></svg>
    <svg width="16" height="16" viewBox="0 0 16 16"><circle cx="8" cy="8" r="7" fill="#8ec4f0" stroke="#dcecfb" /><path d="M8 8L3 3M8 8l5 5" stroke="#fff" stroke-width="3" /><circle cx="8" cy="8" r="2" fill="#2d6fb0" stroke="#fff" /></svg>
    <svg width="16" height="16" viewBox="0 0 16 16"><path d="M6.500 1.500h8v6h-8zM1.500 6.500h8v6h-8z" fill="#1e6fd0" stroke="#cfe2f7" /><path d="M3 14.500h5M12 8v3" stroke="#cfe2f7" stroke-width="1.500" /></svg>
    <svg width="16" height="16" viewBox="0 0 16 16"><path d="M0 16l3-7 6-6 4 4-6 6z" fill="#3f95e8" stroke="#bcdcf8" /><path d="M10 2l2-2 4 4-2 2z" fill="#eee" /></svg>
    <svg width="16" height="16" viewBox="0 0 16 16"><path d="M1 14V2h6l1 2h7v10z" fill="#2f8be0" /><path d="M1 6h14" stroke="#d7ebfd" stroke-width="2" /></svg>
    <svg width="16" height="16" viewBox="0 0 16 16"><path d="M1.500 2.500l2-1h12v9l-2 2h-12z" fill="#1e78de" stroke="#cfe2f7" /><path d="M4 15h8" stroke="#ddd" stroke-width="2" /></svg>
    <svg width="16" height="16" viewBox="0 0 16 16"><circle cx="8" cy="8" r="7" fill="#e0e0e0" /><g fill="#444"><circle cx="8" cy="4" r="2" /><circle cx="8" cy="12" r="2" /><circle cx="4" cy="8" r="2" /><circle cx="12" cy="8" r="2" /></g></svg>
    <svg width="16" height="16" viewBox="0 0 16 16"><path d="M1 1h14v14H1z" fill="#4c55b0" stroke="#8990e0" stroke-dasharray="1 1" /><path d="M3 3h10v10H3z" fill="#d9dcf5" /><path d="M6 4v6h4V4" fill="none" stroke="#3b438f" stroke-width="2" /></svg>
    <svg width="16" height="16" viewBox="0 0 16 16"><circle cx="7" cy="7" r="6.500" fill="#3f95e8" stroke="#cfe2f7" /><path d="M3 3l4 3-3 4M6 13l3-5h4l-2-3 5 5-5 6v-3z" fill="#7fc241" stroke="#fff" stroke-width=".8" /></svg>
    <svg width="16" height="16" viewBox="0 0 16 16"><path d="M1.500 1.500h13v13h-13z" fill="#e8f1fa" stroke="#4a90d9" /><path d="M6 3h4v5h3l-5 5-5-5h3z" fill="#222" /></svg>
    <span>Ctrl droite</span>
  </div>

  <script>
    const letters = "ABCDEFGHIJKLMNOPQRS".split("");
    // a leading * marks a bold cell
    const data = [
      ["Equipe", "Nb Tours", "Tour 1", "*Tour 2"],
      ["*4", "*2", "0:00:15", "0:00:21"],
      ["*10", "*2", "0:00:23", "0:00:23"],
      ["*19", "*2", "0:00:32", "*0:00:28"],
      ["*32", "*2", "0:00:18", "*0:01:10"],
      ["*33", "*2", "0:00:06", "*0:00:35"],
      ["*45", "*1", "0:01:19", ""],
      ["*78", "*2", "0:00:26", "*0:00:26"],
    ];

    const head = letters.map((l, i) => i === 0
      ? `<th class="w-[88px] px-0 pt-[2px] pb-0 h-[21px] bg-[#e1e1e1] text-[#217346] font-bold border-b border-r border-[#ababab]">${l}</th>`
      : `<th class="w-[88px] px-0 pt-[2px] pb-0 h-[21px] text-[#444] font-normal border-b border-b-[#ababab] border-r border-r-[#dadada]">${l}</th>`);
    document.getElementById("columns").innerHTML =
      `<tr><th class="w-[29px] p-0 h-[21px] border-b border-b-[#ababab] border-r border-r-[#dadada]"><svg class="ml-auto mr-[3px]" width="12" height="13" viewBox="0 0 12 13"><path d="M12 0v13H0z" fill="#dcdcdc" /></svg></th>${head.join("")}</tr>`;

    let rows = "";
    for (let n = 1; n <= 30; n++) {
      rows += n === 1
        ? `<tr><th class="px-0 pt-[2px] pb-0 h-[21px] bg-[#e1e1e1] text-[#217346] font-bold border-b border-r border-[#ababab]">1</th>`
        : `<tr><th class="px-0 pt-[2px] pb-0 h-[21px] text-[#444] font-normal border-b border-b-[#dadada] border-r border-r-[#ababab]">${n}</th>`;
      letters.forEach((l, i) => {
        const v = data[n - 1] && i < 4 ? data[n - 1][i] : null;
        if (v === null) rows += `<td class="p-0 h-[21px]"></td>`;
        else if (v[0] === "*") rows += `<td class="px-0 pt-[2px] pb-0 h-[21px] font-bold border-b border-r border-black">${v.slice(1)}</td>`;
        else rows += `<td class="px-0 pt-[2px] pb-0 h-[21px] text-[15px] border-b border-r border-black">${v}</td>`;
      });
      rows += "</tr>";
    }
    document.getElementById("rows").innerHTML = rows;
  </script>
</body>

</html>
